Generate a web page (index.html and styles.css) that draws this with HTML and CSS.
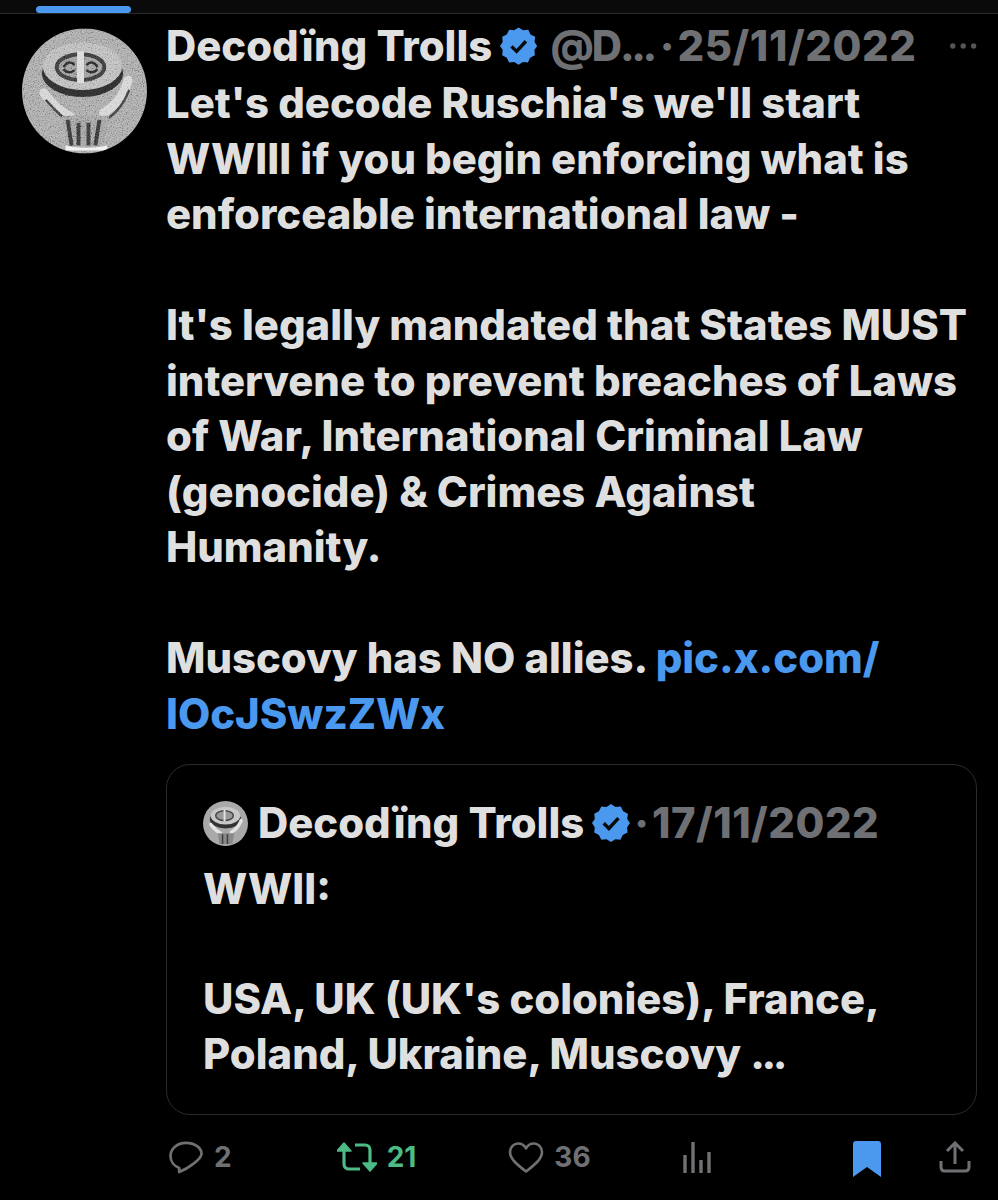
FILE: index.html
```html
<!DOCTYPE html>
<html lang="en">
<head>
  <meta charset="UTF-8">
  <title>Decoding Trolls post</title>
  <link rel="stylesheet" href="styles.css">
</head>
<body>

  <div class="tabs"><div class="tab-active"></div></div>

  <div class="tweet">
    <svg class="avatar" viewBox="0 0 126 126">
      <defs>
        <filter id="grain">
          <feTurbulence type="fractalNoise" baseFrequency="0.8" numOctaves="3" seed="4"/>
          <feColorMatrix type="saturate" values="0"/>
          <feComponentTransfer>
            <feFuncR type="linear" slope="3" intercept="-1"/>
            <feFuncG type="linear" slope="3" intercept="-1"/>
            <feFuncB type="linear" slope="3" intercept="-1"/>
            <feFuncA type="linear" slope="0" intercept="1"/>
          </feComponentTransfer>
        </filter>
        <filter id="soft"><feGaussianBlur stdDeviation="0.7"/></filter>
        <clipPath id="round"><circle cx="63" cy="63" r="63"/></clipPath>
      </defs>
      <g clip-path="url(#round)">
        <rect width="126" height="126" fill="#a4a4a4"/>
        <g filter="url(#soft)">
          <ellipse cx="61" cy="45" rx="41" ry="24" fill="#2e2e2e"/>
          <ellipse cx="61" cy="38" rx="40" ry="24" fill="#b8b8b8"/>
          <ellipse cx="59" cy="39" rx="24" ry="13" fill="#989898" stroke="#3e3e3e" stroke-width="4"/>
          <path d="M59 23v32" stroke="#d8d8d8" stroke-width="7"/>
          <path d="M42 39c3-6 8-6 11-2M76 39c-3-6-8-6-11-2M42 41c3 4 8 4 11 1M76 41c-3 4-8 4-11 1" fill="none" stroke="#2e2e2e" stroke-width="2.500"/>
          <path d="M22 65c8 11 17 19 27 24" fill="none" stroke="#d2d2d2" stroke-width="9" stroke-linecap="round"/>
          <path d="M107 52c-4 14-12 26-25 33" fill="none" stroke="#d2d2d2" stroke-width="9" stroke-linecap="round"/>
          <path d="M24 72c8 9 15 17 24 22M108 62c-5 13-13 24-24 30" fill="none" stroke="#444" stroke-width="2.500"/>
          <path d="M40 88h48l-6 30H46z" fill="#9c9c9c"/>
          <path d="M46 92l4 26M57 95v23M67 95v23M78 92l-4 26" stroke="#3a3a3a" stroke-width="4" fill="none"/>
          <path d="M44 118c13 3 28 3 42 0v5H44z" fill="#f0f0f0"/>
        </g>
        <rect width="126" height="126" filter="url(#grain)" opacity="0.3" class="avatar-grain"/>
      </g>
    </svg>

    <div class="content">
      <div class="head">
        <span class="name">Decodïng Trolls</span>
        <svg class="badge" viewBox="0 0 22 22"><use href="#verified"/></svg>
        <span class="handle">@D<span class="dots">...</span></span>
        <span class="sep">·</span>
        <span class="date">25/11/2022</span>
        <svg class="more" viewBox="0 0 30 8"><circle cx="4" cy="4" r="2.8"/><circle cx="15" cy="4" r="2.8"/><circle cx="26" cy="4" r="2.8"/></svg>
      </div>

      <p class="body">Let's decode Ruschia's we'll start<br>WWIII if you begin enforcing what is<br>enforceable international law -<br><br>It's legally mandated that States MUST<br>intervene to prevent breaches of Laws<br>of War, International Criminal Law<br>(genocide) &amp; Crimes Against<br>Humanity.<br><br>Muscovy has NO allies. <a class="link" href="#">pic.x.com/<br>IOcJSwzZWx</a></p>

      <div class="quote">
        <div class="quote-head">
          <svg class="quote-avatar" viewBox="0 0 46 46">
            <circle cx="23" cy="23" r="23" fill="#a9a9a9"/>
            <ellipse cx="23" cy="19" rx="16" ry="9" fill="#333"/>
            <ellipse cx="23" cy="15" rx="15" ry="9" fill="#c8c8c8"/>
            <ellipse cx="22" cy="15" rx="9" ry="5" fill="#999" stroke="#444" stroke-width="1.500"/>
            <path d="M22 9v12" stroke="#e2e2e2" stroke-width="2"/>
            <path d="M8 24c3 4 6 7 10 9M39 20c-2 5-5 9-10 12" fill="none" stroke="#e4e4e4" stroke-width="3.500" stroke-linecap="round"/>
            <path d="M15 33h17l-2 11H17z" fill="#8a8a8a"/>
            <path d="M20 34v10M25 34v10" stroke="#3e3e3e" stroke-width="1.500"/>
          </svg>
          <span class="name">Decodïng Trolls</span>
          <svg class="badge" viewBox="0 0 22 22"><use href="#verified"/></svg>
          <span class="sep">·</span>
          <span class="date">17/11/2022</span>
        </div>
        <p class="body">WWII:<br><br>USA, UK (UK's colonies), France,<br>Poland, Ukraine, Muscovy <span class="dots">...</span></p>
      </div>

      <div class="actions">
        <div class="action action-reply">
          <svg class="icon" viewBox="0 0 36 34"><path d="M18 2C9 2 2 8 2 15.500c0 6 4 10.500 9 12.300V32c5-2.200 10-5 14.500-8.500C30.500 20 34 17 34 13 34 7 27 2 18 2z" fill="none" stroke="#6f7074" stroke-width="2.800" stroke-linejoin="round"/></svg>
          <span class="count">2</span>
        </div>
        <div class="action action-rt">
          <svg class="icon" viewBox="0 0 40 32"><path d="M7 6v17c0 3 2 5 5 5h11" fill="none" stroke="#4cbb85" stroke-width="3.200"/><path d="M0 10l7-8 7 8z" fill="#4cbb85" stroke="#4cbb85" stroke-width="1.500" stroke-linejoin="round"/><path d="M33 26V9c0-3-2-5-5-5H18" fill="none" stroke="#4cbb85" stroke-width="3.200"/><path d="M26 22l7 8 7-8z" fill="#4cbb85" stroke="#4cbb85" stroke-width="1.500" stroke-linejoin="round"/></svg>
          <span class="count">21</span>
        </div>
        <div class="action action-like">
          <svg class="icon" viewBox="0 0 36 32"><path d="M18 30C9 23 2 17.500 2 10.500 2 5.500 6 2 10 2c3.500 0 6.500 1.800 8 5 1.500-3.200 4.500-5 8-5 4 0 8 3.500 8 8.500C34 17.500 27 23 18 30z" fill="none" stroke="#6f7074" stroke-width="2.600" stroke-linejoin="round"/></svg>
          <span class="count">36</span>
        </div>
        <div class="action action-views">
          <svg class="icon" viewBox="0 0 30 32"><path d="M3 14v18M11 1v31M19 19v13M27 11v21" stroke="#6f7074" stroke-width="3.400"/></svg>
        </div>
        <div class="action action-save">
          <svg class="icon" viewBox="0 0 28 36"><path d="M0 3a3 3 0 0 1 3-3h22a3 3 0 0 1 3 3v33L14 26 0 36z" fill="#4b98ef"/></svg>
        </div>
        <div class="action action-share">
          <svg class="icon" viewBox="0 0 32 32"><path d="M16 23V3M8 10l8-8 8 8M2 20v6c0 2.500 1.500 4 4 4h20c2.500 0 4-1.500 4-4v-6" fill="none" stroke="#6f7074" stroke-width="3"/></svg>
        </div>
      </div>
    </div>
  </div>

  <svg class="defs-only">
    <defs>
      <g id="verified">
        <path fill="#4b98ef" d="M11 0l2.600 1.700 3.100-.3 1.300 2.800 2.800 1.400-.4 3.100L22 11l-1.700 2.400.3 3.100-2.800 1.400-1.300 2.800-3-.3L11 22l-2.600-1.600-3 .3-1.400-2.800-2.700-1.400.3-3.100L0 11l1.600-2.300-.3-3.100L4 4.200l1.400-2.800 3 .3z"/>
        <path d="M6.800 11.200l3 3 5.500-6" fill="none" stroke="#0b0b0b" stroke-width="2"/>
      </g>
    </defs>
  </svg>

</body>
</html>
```

FILE: styles.css
```css
body {
  margin: 0;
  background: #000;
  color: #dfdfdf;
  font-family: "Inter", "Liberation Sans", sans-serif;
  font-weight: 800;
  font-size: 41.8px;
  overflow: hidden;
}

.tabs {
  height: 13px;
  background: #0a0a0a;
  border-bottom: 1px solid #2a2b2d;
  padding-left: 36px;
  display: flex;
  align-items: flex-end;
}

.tab-active {
  width: 95px;
  height: 7px;
  background: #4b98ef;
  border-radius: 4px;
}

.tweet {
  display: flex;
  gap: 19px;
  padding: 14px 21px 0 22px;
}

.avatar {
  width: 125px;
  height: 126px;
  flex: none;
}

.avatar-grain {
  mix-blend-mode: overlay;
}

.content {
  flex: 1;
  min-width: 0;
}

.head {
  display: flex;
  align-items: center;
  height: 36px;
  white-space: nowrap;
}

.badge {
  width: 38px;
  height: 38px;
  margin-left: 8px;
}

.handle {
  color: #6f7074;
  margin-left: 13px;
  letter-spacing: -2px;
}

.dots {
  letter-spacing: -3.5px;
}

.sep {
  color: #6f7074;
  margin: 0 3px 0 6px;
}

.quote-head .sep {
  margin-left: 4px;
}

.date {
  color: #6f7074;
  letter-spacing: 0.6px;
}

.quote-head .date {
  letter-spacing: 0.5px;
}

.more {
  width: 29px;
  height: 8px;
  margin-left: 32px;
  fill: #55565a;
}

.body {
  margin: 0;
  line-height: 55.5px;
  white-space: nowrap;
}

.content > .body {
  margin-top: 12px;
}

.link {
  color: #4b98ef;
  text-decoration: none;
}

.quote {
  margin-top: 22px;
  height: 351px;
  box-sizing: border-box;
  border: 1px solid #2a2b2d;
  border-radius: 24px;
  padding: 38px 36px 0;
}

.quote-head {
  display: flex;
  align-items: center;
  height: 40px;
  white-space: nowrap;
}

.quote-avatar {
  width: 45px;
  height: 45px;
  margin-right: 10px;
  flex: none;
}

.quote-head .badge {
  margin-left: 8px;
}

.quote .body {
  margin-top: 19px;
  line-height: 55px;
}

.defs-only {
  display: none;
}

.actions {
  height: 60px;
  margin-top: 12px;
  display: flex;
}

.action {
  display: flex;
  align-items: center;
  gap: 10px;
  color: #6f7074;
  font-size: 28px;
  font-weight: 700;
}

.action .icon {
  height: 33px;
  width: 36px;
}

.action-reply {
  margin-left: 2px;
}

.action-rt {
  margin-left: 105px;
  color: #4cbb85;
}

.action-rt .icon {
  width: 40px;
  height: 32px;
}

.action-like {
  margin-left: 92px;
}

.action-views {
  margin-left: 91px;
}

.action-views .icon {
  width: 30px;
  height: 32px;
}

.action-save {
  margin-left: 141px;
}

.action-save .icon {
  width: 28px;
  height: 36px;
  margin-top: 3px;
}

.action-share {
  margin-left: 58px;
}

.action-share .icon {
  width: 32px;
  height: 32px;
}
```
